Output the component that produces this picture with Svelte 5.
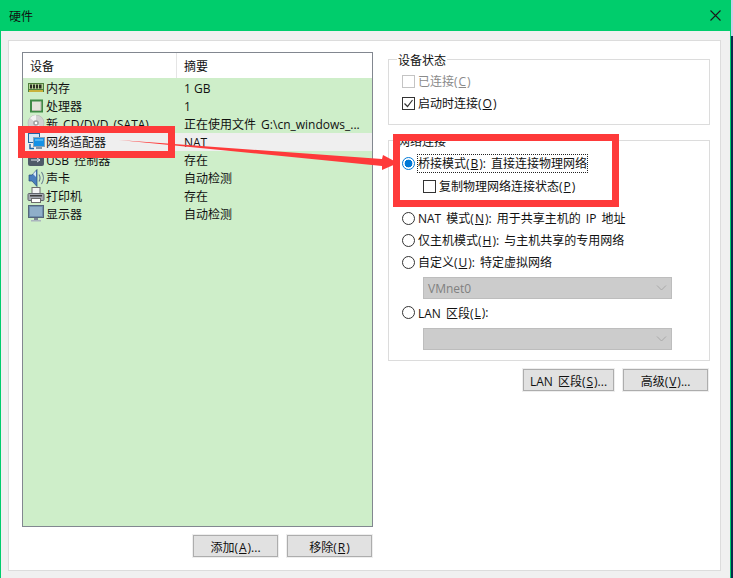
<script>
  const devices = [
    { icon: 'mem', name: '内存', info: '1 GB', tight: true },
    { icon: 'cpu', name: '处理器', info: '1' },
    { icon: 'cd', name: '新 CD/DVD (SATA)', info: '正在使用文件 G:\\cn_windows_...' },
    { icon: 'net', name: '网络适配器', info: 'NAT', selected: true },
    { icon: 'usb', name: 'USB 控制器', info: '存在' },
    { icon: 'snd', name: '声卡', info: '自动检测' },
    { icon: 'prn', name: '打印机', info: '存在' },
    { icon: 'mon', name: '显示器', info: '自动检测' }
  ]
</script>

<div class="page">
  <div class="window">
    <div class="titlebar">
      <span>硬件</span>
      <svg class="close" width="11" height="11" viewBox="0 0 11 11"><path d="M.5.5l10 10M10.5.5l-10 10" stroke="#1a1a1a" stroke-width="1.1" fill="none" /></svg>
    </div>

    <div class="body">
      <div class="panel">
        <div class="left">
          <div class="list">
            <div class="list-head">
              <div class="col1 head-cell">设备</div>
              <div class="col2 head-cell">摘要</div>
            </div>
            {#each devices as d}
              <div class="row" class:selected={d.selected}>
                <div class="col1 dev">
                  <svg class="ico" width="18" height="18" viewBox="0 0 18 18">
                    {#if d.icon === 'mem'}
                      <rect x="1" y="4" width="16" height="9" fill="#4f7f3c" />
                      <rect x="2" y="5" width="14" height="5" fill="#b9d49a" />
                      <path d="M3 5.500h2v4H3zM6 5.500h2v4H6zM9 5.500h2v4H9zM12 5.500h2.500v4H12z" fill="#2b2f22" />
                      <rect x="2" y="11" width="14" height="2" fill="#c8b23c" />
                    {:else if d.icon === 'cpu'}
                      <rect x="3" y="2.500" width="13" height="13" fill="#3f8a46" />
                      <rect x="5" y="4.500" width="9" height="9" fill="#e4e4da" />
                      <path d="M5 13.500h9v-9" stroke="#b4b8a8" fill="none" />
                    {:else if d.icon === 'cd'}
                      <circle cx="9" cy="8" r="8" fill="#d2d2d2" stroke="#b2b2b2" stroke-width="0.6" />
                      <path d="M9 8L3 3a8 8 0 0 1 6-3zM9 8l6 5a8 8 0 0 1-6 3z" fill="#f2f2f2" />
                      <circle cx="9" cy="8" r="2.800" fill="#a0a0a0" />
                      <circle cx="9" cy="8" r="1.300" fill="#fff" />
                    {:else if d.icon === 'net'}
                      <rect x="1.500" y="0.500" width="11" height="9" fill="#d6e8f6" stroke="#1d63a4" />
                      <path d="M3 11v4.500h4" stroke="#1d63a4" stroke-width="1.400" fill="none" />
                      <rect x="6.500" y="4.500" width="11" height="9" fill="#1491e6" stroke="#8aa2b6" />
                      <rect x="8" y="6" width="8" height="2" fill="#4db4f2" />
                      <rect x="9" y="14" width="6" height="2" fill="#8396a8" />
                    {:else if d.icon === 'usb'}
                      <rect x="1" y="0" width="16" height="15" rx="2" fill="#4e5a68" />
                      <path d="M4 9h9M10 7l3 2-3 2" stroke="#dfe6ee" fill="none" />
                    {:else if d.icon === 'snd'}
                      <path d="M2 6h3l5-5.500v17L5 12H2z" fill="#4a7fbe" stroke="#2a4c78" stroke-width="0.700" />
                      <path d="M6 5l3-3v6z" fill="#d8e8f6" />
                      <path d="M12 5.500c1.300 2.200 1.300 4.800 0 7M14.500 3c2.400 3.500 2.400 8.500 0 12" stroke="#66788f" stroke-width="1.100" fill="none" />
                    {:else if d.icon === 'prn'}
                      <rect x="5" y="0.500" width="8" height="6" fill="#f4f4f4" stroke="#6c6c6c" />
                      <rect x="1" y="6.500" width="16" height="7" rx="1" fill="#a6aab2" stroke="#5f636b" />
                      <rect x="4.500" y="11.500" width="9" height="4" fill="#fff" stroke="#6c6c6c" />
                      <rect x="3" y="8" width="12" height="1.500" fill="#3d3d3d" />
                    {:else}
                      <rect x="1.500" y="0.500" width="15" height="12" fill="#6e8fae" stroke="#56677a" />
                      <rect x="3" y="2" width="12" height="9" fill="#8fafc9" />
                      <rect x="7" y="13" width="4" height="2" fill="#7c8894" />
                      <rect x="4" y="15" width="10" height="1.500" fill="#aab4be" />
                    {/if}
                  </svg>
                  <span>{d.name}</span>
                </div>
                <div class="col2 info" class:tight={d.tight}>{d.info}</div>
              </div>
            {/each}
          </div>
          <div class="btns">
            <button>添加(<u>A</u>)...</button>
            <button>移除(<u>R</u>)</button>
          </div>
        </div>

        <div class="right">
          <div class="group status">
            <div class="legend">设备状态</div>
            <label class="opt disabled"><i class="check"></i>已连接(<u>C</u>)</label>
            <label class="opt">
              <i class="check">
                <svg width="11" height="11" viewBox="0 0 11 11"><path d="M1.500 5.500l3 3 5-6.500" stroke="#333" stroke-width="1.200" fill="none" /></svg>
              </i>启动时连接(<u>O</u>)
            </label>
          </div>

          <div class="group conn">
            <div class="legend">网络连接</div>
            <label class="opt"><i class="radio on"></i><span class="focus">桥接模式(<u>B</u>): 直接连接物理网络</span></label>
            <label class="opt sub"><i class="check"></i>复制物理网络连接状态(<u>P</u>)</label>
            <label class="opt first"><i class="radio"></i>NAT 模式(<u>N</u>): 用于共享主机的 IP 地址</label>
            <label class="opt"><i class="radio"></i>仅主机模式(<u>H</u>): 与主机共享的专用网络</label>
            <label class="opt"><i class="radio"></i>自定义(<u>U</u>): 特定虚拟网络</label>
            <div class="select">
              <span>VMnet0</span>
              <svg width="11" height="6" viewBox="0 0 11 6"><path d="M1 .5l4.500 4.500L10 .5" stroke="#a8a8a8" fill="none" /></svg>
            </div>
            <label class="opt lan"><i class="radio"></i>LAN 区段(<u>L</u>):</label>
            <div class="select last-sel">
              <span></span>
              <svg width="11" height="6" viewBox="0 0 11 6"><path d="M1 .5l4.500 4.500L10 .5" stroke="#a8a8a8" fill="none" /></svg>
            </div>
          </div>

          <div class="btns right-btns">
            <button class="lanbtn">LAN 区段(<u>S</u>)...</button>
            <button>高级(<u>V</u>)...</button>
          </div>
        </div>
      </div>
    </div>
  </div>

  <!-- annotations drawn on top of the screenshot -->
  <div class="mark mark-a"></div>
  <div class="mark mark-b"></div>
  <svg class="arrow" width="733" height="578" viewBox="0 0 733 578">
    <polygon points="119,140 382,159 383,155 398,163 382,170 382,166" fill="#fe3a3a" />
  </svg>
</div>

<style>
  :global(body) {
    margin: 0;
  }

  .page {
    position: relative;
    width: 733px;
    height: 578px;
    overflow: hidden;
    background: linear-gradient(#c9cfe8 36px, #0c2b4e 36px);
    font-family: "Open Sans", "Noto Sans CJK SC", sans-serif;
    font-size: 12px;
    word-spacing: 2px;
    color: #111;
  }

  u {
    margin: 0 1px;
  }

  .window {
    width: 731px;
    height: 578px;
    box-sizing: border-box;
    border-left: 1px solid #00cd6c;
    border-right: 1px solid #00cd6c;
    background: #f0f0f0;
    display: flex;
    flex-direction: column;
  }

  .titlebar {
    height: 31px;
    flex: none;
    background: #00cd6c;
    display: flex;
    align-items: center;
    justify-content: space-between;
    padding: 0 9px 0 8px;
  }

  .body {
    flex: 1;
    padding: 9px 9px 7px 7px;
    min-height: 0;
    display: flex;
  }

  .panel {
    flex: 1;
    background: #fff;
    border: 1px solid #dcdcdc;
    display: flex;
    padding: 11px 10px 0 13px;
    gap: 15px;
  }

  .left {
    width: 351px;
    flex: none;
  }

  .list {
    height: 475px;
    box-sizing: border-box;
    border: 1px solid #828790;
    background: #ceeec9;
  }

  .list-head {
    display: flex;
    height: 25px;
    background: #fff;
    margin-bottom: 1px;
  }

  .head-cell {
    line-height: 27px;
  }

  .list-head .col1 {
    box-sizing: border-box;
    padding-left: 7px;
    border-right: 1px solid #e5e5e5;
  }

  .col1 {
    width: 154px;
    flex: none;
  }

  .col2 {
    padding-left: 7px;
  }

  .row {
    display: flex;
    height: 18px;
    line-height: 18px;
    white-space: nowrap;
  }

  .row.selected {
    background: #efefef;
  }

  .info {
    line-height: 20px;
  }

  .info.tight {
    word-spacing: 0;
  }

  .dev {
    display: flex;
    align-items: center;
    gap: 1px;
    padding-left: 4px;
    box-sizing: border-box;
  }

  .dev span {
    padding-top: 2px;
  }

  .ico {
    flex: none;
  }

  .btns {
    display: flex;
    justify-content: flex-end;
    gap: 9px;
    margin-top: 8px;
    margin-right: 1px;
  }

  button {
    width: 85px;
    height: 22px;
    padding: 1px 0 0;
    box-sizing: border-box;
    background: #e1e1e1;
    border: 1px solid #adadad;
    outline: 1px solid #eeeeee;
    font: inherit;
    word-spacing: inherit;
    color: #111;
  }

  .lanbtn {
    width: 91px;
  }

  .right {
    flex: 1;
    min-width: 0;
    padding-top: 7px;
  }

  .group {
    position: relative;
    border: 1px solid #dcdcdc;
    box-sizing: border-box;
  }

  .legend {
    position: absolute;
    top: -8px;
    left: 8px;
    padding: 0 1px;
    background: #fff;
    line-height: 17px;
  }

  .status {
    height: 66px;
    padding: 10px 0 0 13px;
    margin-bottom: 15px;
  }

  .conn {
    height: 221px;
    padding: 11px 0 0 13px;
  }

  .opt {
    display: flex;
    align-items: center;
    height: 22px;
    white-space: pre;
  }

  .opt.disabled {
    color: #8a8a8a;
  }

  .opt.disabled .check {
    border-color: #c4c4c4;
  }

  .check {
    width: 13px;
    height: 13px;
    box-sizing: border-box;
    border: 1px solid #333;
    background: #fff;
    margin-right: 3px;
    flex: none;
    display: flex;
    align-items: center;
    justify-content: center;
  }

  .radio {
    width: 13px;
    height: 13px;
    box-sizing: border-box;
    border: 1px solid #333;
    border-radius: 50%;
    background: #fff;
    margin-right: 3px;
    flex: none;
  }

  .radio.on {
    border-color: #0078d7;
    background: radial-gradient(circle, #0078d7 0 3.6px, #fff 4.2px);
  }

  .focus {
    outline: 1px dotted #222;
    outline-offset: 0;
    line-height: 17px;
  }

  .sub {
    margin-left: 21px;
    margin-top: 1px;
  }

  .first {
    margin-top: 10px;
  }

  .select {
    margin: 4px 0 0 21px;
    width: 249px;
    height: 22px;
    box-sizing: border-box;
    border: 1px solid #bdbdbd;
    background: #cccccc;
    color: #808080;
    display: flex;
    align-items: center;
    justify-content: space-between;
    padding: 0 4px;
  }

  .lan {
    margin-top: 3px;
    height: 21px;
  }

  .last-sel {
    margin-top: 5px;
  }

  .right-btns {
    margin-top: 8px;
    margin-right: 2px;
  }

  .mark {
    position: absolute;
    box-sizing: border-box;
    border: 7px solid #fe3a3a;
    pointer-events: none;
  }

  .mark-a {
    left: 18px;
    top: 126px;
    width: 157px;
    height: 32px;
  }

  .mark-b {
    left: 393px;
    top: 134px;
    width: 226px;
    height: 73px;
  }

  .arrow {
    position: absolute;
    left: 0;
    top: 0;
    pointer-events: none;
  }
</style>
